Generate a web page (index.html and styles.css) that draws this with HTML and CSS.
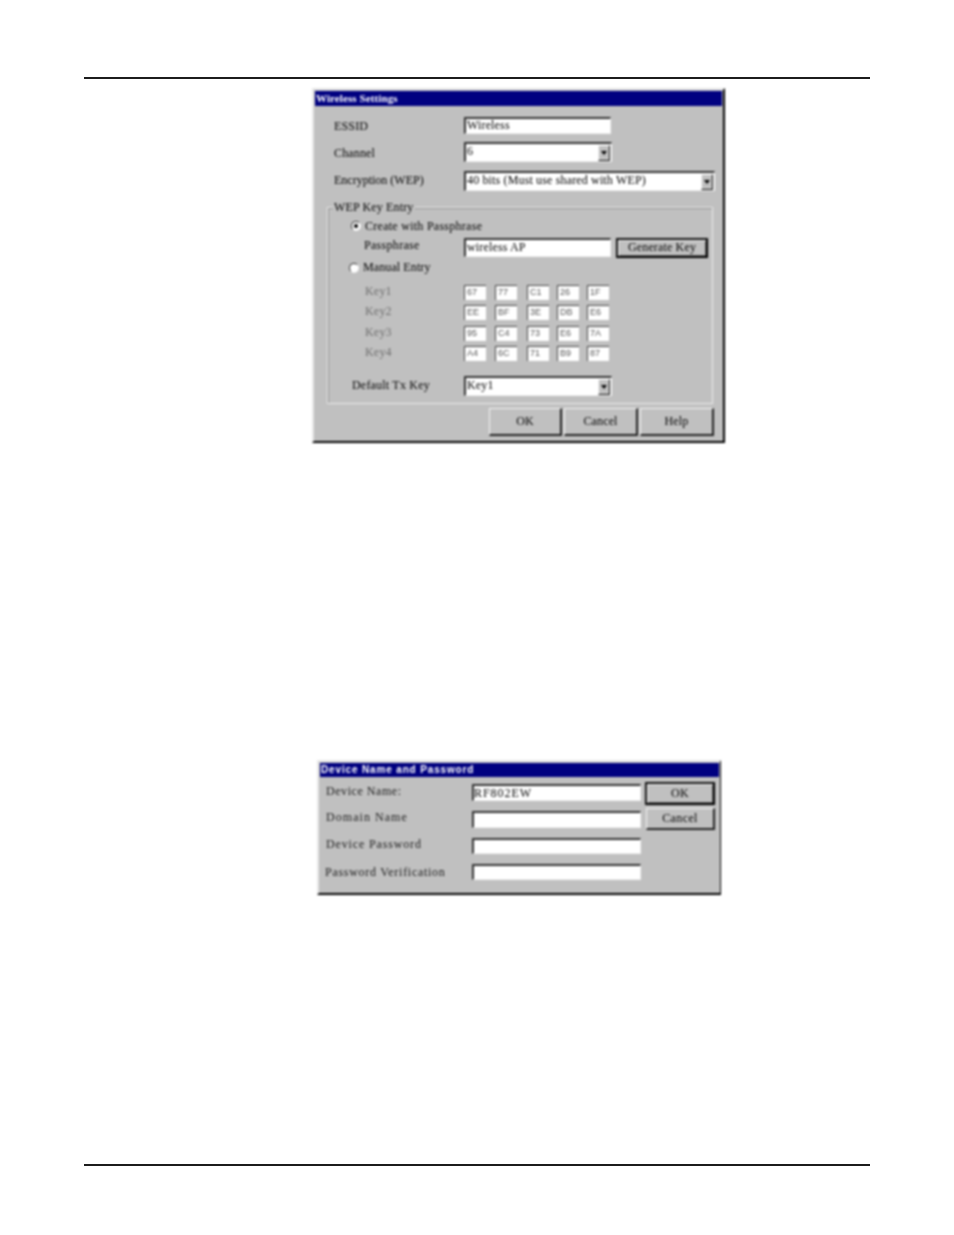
FILE: index.html
```html
<!DOCTYPE html>
<html lang="en">
<head>
<meta charset="utf-8">
<title>Wireless Settings</title>
<link rel="stylesheet" href="styles.css">
</head>
<body>
<main class="page">
  <hr class="rule">

  <section class="dialog wireless">
    <h2 class="title">Wireless Settings</h2>

    <div class="row essid"><span class="lbl">ESSID</span><span class="field w147 h17">Wireless</span></div>
    <div class="row channel"><span class="lbl lbl-down">Channel</span>
      <span class="combo w148"><span class="combo-text">6</span><span class="arrow"></span></span></div>
    <div class="row encryption"><span class="lbl lbl-up">Encryption (WEP)</span>
      <span class="combo w251"><span class="combo-text">40 bits (Must use shared with WEP)</span><span class="arrow"></span></span></div>

    <div class="group">
      <span class="legend">WEP Key Entry</span>
      <div class="radio-row create"><span class="radio on"></span><span>Create with Passphrase</span></div>
      <div class="pass-row"><span class="lbl pass-lbl">Passphrase</span><span class="field w147 h19">wireless AP</span>
        <span class="btn default">Generate Key</span></div>
      <div class="radio-row manual"><span class="radio"></span><span class="manual-text">Manual Entry</span></div>

      <div class="key-row k1"><span class="key-lbl">Key1</span><div class="cells"><span class="cell">67</span><span class="cell">77</span><span class="cell">C1</span><span class="cell">26</span><span class="cell">1F</span></div></div>
      <div class="key-row k2"><span class="key-lbl">Key2</span><div class="cells"><span class="cell">EE</span><span class="cell">BF</span><span class="cell">3E</span><span class="cell">DB</span><span class="cell">E6</span></div></div>
      <div class="key-row k3"><span class="key-lbl">Key3</span><div class="cells"><span class="cell">95</span><span class="cell">C4</span><span class="cell">73</span><span class="cell">E6</span><span class="cell">7A</span></div></div>
      <div class="key-row k4"><span class="key-lbl">Key4</span><div class="cells"><span class="cell">A4</span><span class="cell">6C</span><span class="cell">71</span><span class="cell">B9</span><span class="cell">87</span></div></div>

      <div class="tx-row"><span class="lbl tx-lbl">Default Tx Key</span>
        <span class="combo w148"><span class="combo-text">Key1</span><span class="arrow"></span></span></div>
    </div>

    <div class="actions">
      <span class="btn act-ok">OK</span><span class="btn act">Cancel</span><span class="btn act">Help</span>
    </div>
  </section>

  <section class="dialog device">
    <h2 class="title">Device Name and Password</h2>
    <div class="device-body">
      <div class="device-fields">
        <div class="dev-row d1"><span class="dev-lbl">Device Name:</span><span class="field dev-field">RF802EW</span></div>
        <div class="dev-row d2"><span class="dev-lbl">Domain Name</span><span class="field dev-field"></span></div>
        <div class="dev-row d3"><span class="dev-lbl">Device Password</span><span class="field dev-field"></span></div>
        <div class="dev-row d4"><span class="dev-lbl">Password Verification</span><span class="field dev-field"></span></div>
      </div>
      <div class="device-btns">
        <span class="btn default dev-ok">OK</span>
        <span class="btn dev-cancel">Cancel</span>
      </div>
    </div>
  </section>

  <hr class="rule bottom">
</main>
</body>
</html>
```

FILE: styles.css
```css
* { box-sizing: border-box; }
html, body { margin: 0; padding: 0; background: #fff; }
body { width: 954px; height: 1235px; overflow: hidden; }
.page { width: 786px; margin-left: 84px; padding-top: 77px; }
.rule { margin: 0; border: 0; height: 2px; background: #1c1c1c; }
.rule.bottom { margin-top: 269px; }

.dialog {
  background: #c0c0c0;
  color: #000;
  font: 12px/14px "Liberation Serif", serif;
  letter-spacing: 0.15px;
  border-style: solid;
  border-width: 2px;
  border-color: #e8e8e8 #000 #000 #e8e8e8;
  padding: 1px;
  filter: blur(0.8px);
}
.wireless { width: 413px; height: 355px; margin: 9px 0 0 228px; }
.device { width: 404px; height: 135px; margin: 317px 0 0 233px; font-size: 12px; letter-spacing: 0.72px; border-width: 2px 1px 2px 2px; color: #1a1a1a; }

.title {
  margin: 0; height: 15px; background: #000080; color: #fff;
  font: bold 10px/15px "Liberation Sans", sans-serif;
  padding-left: 1px;
  white-space: nowrap;
}
.wireless .title { font-family: "Liberation Serif", serif; font-size: 11px; letter-spacing: 0.1px; }
.device .title { height: 14px; font-size: 10px; line-height: 14px; letter-spacing: 0.85px; padding-left: 1px; }

.row { display: flex; align-items: center; padding-left: 19px; }
.lbl { flex: none; width: 130px; }
.lbl-down { position: relative; top: 1px; }
.lbl-up { position: relative; top: -1px; letter-spacing: 0; }
.essid { margin-top: 11px; height: 17px; }
.channel { margin-top: 8px; height: 20px; }
.encryption { margin-top: 9px; height: 20px; }

.field {
  display: block; flex: none;
  background: #fff;
  border-style: solid; border-width: 2px 1px 1px 2px;
  border-color: #333 #f0f0f0 #f0f0f0 #333;
  padding-left: 1px;
  line-height: 12px;
  white-space: nowrap;
  color: #000;
}
.w147 { width: 147px; }
.h17 { height: 17px; }
.h19 { height: 19px; line-height: 14px; }

.combo {
  display: flex; flex: none; height: 20px; background: #fff;
  border-style: solid; border-width: 2px 1px 1px 2px;
  border-color: #333 #f0f0f0 #f0f0f0 #333;
  align-items: center;
  justify-content: space-between;
  padding-right: 1px;
}
.w148 { width: 148px; }
.w251 { width: 251px; }
.combo-text { padding-left: 1px; white-space: nowrap; margin-top: -3px; }
.arrow {
  display: flex; align-items: center; justify-content: center;
  width: 12px; height: 16px; background: #c0c0c0;
  border-style: solid; border-width: 1px;
  border-color: #f4f4f4 #111 #111 #f4f4f4;
}
.arrow::before {
  content: ""; width: 0; height: 0;
  border-left: 3px solid transparent;
  border-right: 3px solid transparent;
  border-top: 4px solid #000;
}

.group {
  position: relative;
  margin: 16px 0 0 12px;
  width: 386px; height: 197px;
  border: 1px solid #ececec;
  box-shadow: inset 1px 1px 0 #8c8c8c;
}
.legend { position: absolute; top: -8px; left: 5px; padding: 0 1px; background: #c0c0c0; }

.radio-row { display: flex; align-items: center; gap: 4px; height: 14px; }
.create { margin-top: 11px; padding-left: 23px; letter-spacing: 0.27px; }
.manual { margin-top: 3px; padding-left: 21px; }
.manual-text { margin-top: -2px; letter-spacing: 0.1px; }
.radio {
  flex: none; width: 10px; height: 10px; border-radius: 50%;
  background: #fff; border: 1px solid #333;
  border-right-color: #f0f0f0; border-bottom-color: #f0f0f0;
  display: flex; align-items: center; justify-content: center;
}
.radio.on::before { content: ""; width: 4px; height: 4px; border-radius: 50%; background: #000; }

.pass-row { display: flex; margin-top: 5px; height: 20px; padding-left: 36px; align-items: flex-start; }
.pass-lbl { width: 100px; letter-spacing: 0.3px; }
.btn {
  display: flex; align-items: center; justify-content: center; flex: none;
  background: #c0c0c0;
  border-style: solid; border-width: 1px 2px 2px 1px;
  border-color: #f4f4f4 #222 #222 #f4f4f4;
  color: #000;
  white-space: nowrap;
  padding-bottom: 2px;
}
.btn.default { border: 2px solid; border-color: #111 #000 #000 #111; box-shadow: inset 1px 1px 0 #f4f4f4, inset -1px -1px 0 #666; }
.pass-row .btn { width: 92px; height: 20px; margin-left: 5px; }

.key-row { display: flex; height: 15px; padding-left: 37px; color: #6e6e6e; align-items: center; }
.k1 { margin-top: 10px; }
.k2 { margin-top: 5px; }
.k3 { margin-top: 6px; }
.k4 { margin-top: 5px; }
.key-lbl { width: 99px; margin-top: -4px; letter-spacing: 0.2px; }
.cells { display: grid; grid-template-columns: 31px 32px 30px 30px 22px; }
.cell {
  width: 22px; height: 15px; background: #fff;
  border-style: solid; border-width: 1px 0 0 1px;
  border-color: #444;
  font: 9px/13px "Liberation Sans", sans-serif;
  letter-spacing: 0;
  padding-left: 2px;
  color: #555;
}

.tx-row { display: flex; align-items: center; height: 20px; margin-top: 15px; padding-left: 24px; }
.tx-lbl { width: 112px; letter-spacing: 0.2px; margin-top: -2px; }

.actions { display: flex; justify-content: flex-end; gap: 2px; margin-top: 4px; padding-right: 8px; }
.act-ok { width: 73px; height: 28px; }
.act { width: 74px; height: 28px; }

.device-body { display: flex; }
.device-fields { width: 325px; padding-top: 7px; }
.dev-row { display: flex; align-items: center; padding-left: 6px; }
.dev-lbl { width: 146px; flex: none; margin-top: -4px; }
.d1 .dev-lbl { letter-spacing: 0.55px; }
.d2 .dev-lbl { margin-top: -6px; letter-spacing: 1.05px; }
.d3 .dev-lbl { letter-spacing: 0.85px; }
.d4 .dev-lbl { margin: 0 0 0 -1px; width: 147px; }
.dev-field { width: 169px; height: 17px; letter-spacing: 0.95px; padding-left: 0; line-height: 14px; }
.d1 { height: 17px; }
.d2 { height: 17px; margin-top: 10px; }
.d3 { height: 16px; margin-top: 10px; }
.d4 { height: 16px; margin-top: 10px; }
.d3 .dev-field, .d4 .dev-field { height: 16px; }
.device-btns { display: flex; flex-direction: column; gap: 3px; padding-top: 5px; letter-spacing: 0.4px; }
.dev-ok { width: 70px; height: 23px; }
.dev-cancel { width: 69px; height: 22px; margin-left: 1px; }
```
